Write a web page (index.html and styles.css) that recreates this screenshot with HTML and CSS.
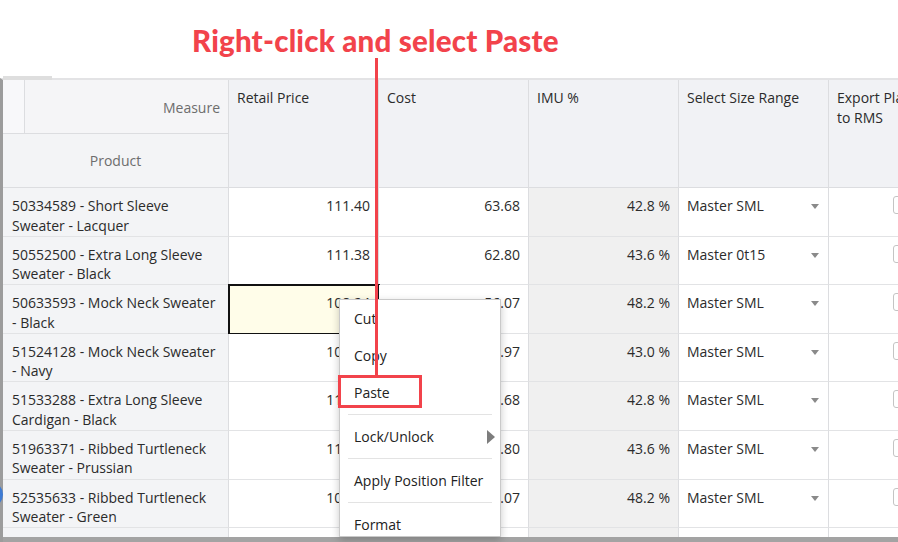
FILE: index.html
```html
<!DOCTYPE html>
<html lang="en">
<head>
    <meta charset="UTF-8">
    <meta name="viewport" content="width=device-width, initial-scale=1.0">
    <title>Paste into Grid</title>
    <link rel="stylesheet" href="styles.css">
</head>
<body>

    <div class="page">
        <div class="callout">
            <h1>Right-click and select Paste</h1>
        </div>

        <div class="sheet">
            <div class="grid-wrap">
                <div class="grid">
                    <!-- header -->
                    <div class="head-cell corner-measure">
                        <span class="corner-stub"></span>
                        <span class="corner-label">Measure</span>
                    </div>
                    <div class="head-cell measure-head">Retail Price</div>
                    <div class="head-cell measure-head">Cost</div>
                    <div class="head-cell measure-head">IMU %</div>
                    <div class="head-cell measure-head">Select Size Range</div>
                    <div class="head-cell measure-head export-head">Export Plan to RMS</div>
                    <div class="head-cell corner-product">Product</div>

                    <!-- rows -->
                    <div class="cell row-head">50334589 - Short Sleeve Sweater - Lacquer</div>
                    <div class="cell num">111.40</div>
                    <div class="cell num">63.68</div>
                    <div class="cell num readonly">42.8 %</div>
                    <div class="cell pick"><span>Master SML</span><span class="caret"></span></div>
                    <div class="cell check"><span class="box"></span></div>

                    <div class="cell row-head">50552500 - Extra Long Sleeve Sweater - Black</div>
                    <div class="cell num">111.38</div>
                    <div class="cell num">62.80</div>
                    <div class="cell num readonly">43.6 %</div>
                    <div class="cell pick"><span>Master 0t15</span><span class="caret"></span></div>
                    <div class="cell check"><span class="box"></span></div>

                    <div class="cell row-head">50633593 - Mock Neck Sweater - Black</div>
                    <div class="cell num selected">108.24</div>
                    <div class="cell num">56.07</div>
                    <div class="cell num readonly">48.2 %</div>
                    <div class="cell pick"><span>Master SML</span><span class="caret"></span></div>
                    <div class="cell check"><span class="box"></span></div>

                    <div class="cell row-head">51524128 - Mock Neck Sweater - Navy</div>
                    <div class="cell num">108.72</div>
                    <div class="cell num">61.97</div>
                    <div class="cell num readonly">43.0 %</div>
                    <div class="cell pick"><span>Master SML</span><span class="caret"></span></div>
                    <div class="cell check"><span class="box"></span></div>

                    <div class="cell row-head">51533288 - Extra Long Sleeve Cardigan - Black</div>
                    <div class="cell num">111.33</div>
                    <div class="cell num">63.68</div>
                    <div class="cell num readonly">42.8 %</div>
                    <div class="cell pick"><span>Master SML</span><span class="caret"></span></div>
                    <div class="cell check"><span class="box"></span></div>

                    <div class="cell row-head">51963371 - Ribbed Turtleneck Sweater - Prussian</div>
                    <div class="cell num">111.38</div>
                    <div class="cell num">62.80</div>
                    <div class="cell num readonly">43.6 %</div>
                    <div class="cell pick"><span>Master SML</span><span class="caret"></span></div>
                    <div class="cell check"><span class="box"></span></div>

                    <div class="cell row-head">52535633 - Ribbed Turtleneck Sweater - Green</div>
                    <div class="cell num">108.24</div>
                    <div class="cell num">56.07</div>
                    <div class="cell num readonly">48.2 %</div>
                    <div class="cell pick"><span>Master SML</span><span class="caret"></span></div>
                    <div class="cell check"><span class="box"></span></div>

                    <div class="cell row-head"></div>
                    <div class="cell num"></div>
                    <div class="cell num"></div>
                    <div class="cell num readonly"></div>
                    <div class="cell pick"></div>
                    <div class="cell check"></div>
                </div>
            </div>
            <div class="hscroll"></div>
        </div>

        <!-- overlays -->
        <span class="side-knob"></span>

        <div class="context-menu">
            <div class="menu-item">Cut</div>
            <div class="menu-item">Copy</div>
            <div class="menu-item">Paste</div>
            <div class="menu-sep"></div>
            <div class="menu-item">Lock/Unlock <span class="sub-arrow"></span></div>
            <div class="menu-sep"></div>
            <div class="menu-item">Apply Position Filter</div>
            <div class="menu-sep"></div>
            <div class="menu-item">Format</div>
        </div>

        <span class="pointer-line"></span>
        <span class="paste-box"></span>
    </div>

</body>
</html>
```

FILE: styles.css
```css
body {
    margin: 0;
    padding: 0;
    background: #fff;
    font-family: "Open Sans", "Noto Sans", Arial, sans-serif;
    color: #2b2b2b;
}

.page {
    position: relative;
    width: 898px;
    height: 542px;
    overflow: hidden;
}

/* title */

.callout {
    height: 78px;
    box-sizing: border-box;
    padding-left: 192px;
    padding-top: 23px;
}

.callout h1 {
    margin: 0;
    font-family: "Lato", "Open Sans", sans-serif;
    font-weight: 900;
    font-size: 29.5px;
    line-height: 36px;
    letter-spacing: 0.2px;
    color: #f2434b;
    white-space: nowrap;
}

/* grid */

.sheet {
    position: relative;
    height: 464px;
    box-sizing: border-box;
    border-top: 2px solid #e3e3e5;
    border-left: 3px solid #9c9c9c;
    display: flex;
    flex-direction: column;
}

.sheet::before {
    content: "";
    position: absolute;
    left: 0;
    top: -4px;
    width: 49px;
    height: 4px;
    background: #dedede;
}

.grid-wrap {
    flex: 1;
    overflow: hidden;
}

.grid {
    display: grid;
    grid-template-columns: 226px repeat(5, 150px);
    grid-template-rows: 54px 54px;
    grid-auto-rows: 48.6px;
    font-size: 14px;
    line-height: 19.5px;
}

.head-cell {
    background: #f1f2f5;
    border-right: 1px solid #dcdde0;
    border-bottom: 1px solid #dcdde0;
    box-sizing: border-box;
    color: #2b2b2b;
}

.measure-head {
    grid-row: span 2;
    padding: 8px 8px;
}

.export-head {
    padding-right: 60px;
}

.corner-measure {
    grid-column: 1;
    grid-row: 1;
    display: flex;
    align-items: center;
    background: #f5f5f7;
    color: #6d6d6d;
}

.corner-stub {
    align-self: stretch;
    width: 21px;
    border-right: 1px solid #dcdde0;
    background: #f8f8fa;
}

.corner-label {
    flex: 1;
    text-align: right;
    padding-right: 8px;
    padding-top: 2px;
}

.corner-product {
    grid-column: 1;
    grid-row: 2;
    display: flex;
    align-items: center;
    justify-content: center;
    background: #f3f4f6;
    color: #6d6d6d;
}

.cell {
    box-sizing: border-box;
    padding: 8px 8px 0;
    border-right: 1px solid #dcdde0;
    border-bottom: 1px solid #e2e3e5;
    background: #fff;
    white-space: nowrap;
}

.row-head {
    background: #f3f4f6;
    padding-left: 9px;
    white-space: normal;
}

.num {
    text-align: right;
}

.readonly {
    background: #f0f0f0;
}

.selected {
    background: #fffde9;
    outline: 2px solid #111;
    outline-offset: -1px;
}

.pick {
    display: flex;
    justify-content: space-between;
    padding-right: 9px;
}

.caret {
    margin-top: 8px;
    width: 0;
    height: 0;
    border-left: 4.5px solid transparent;
    border-right: 4.5px solid transparent;
    border-top: 5px solid #8a8a8a;
}

.check {
    display: flex;
    justify-content: center;
    padding-left: 4px;
}

.box {
    width: 17px;
    height: 18px;
    box-sizing: border-box;
    border: 1px solid #c4c4c4;
    border-radius: 3px;
    background: #fff;
}

.hscroll {
    height: 5px;
    background: #a3a3a3;
}

/* overlays */

.side-knob {
    position: absolute;
    left: -22px;
    top: 482px;
    width: 25px;
    height: 25px;
    border-radius: 50%;
    background: #3e7bd4;
}

.context-menu {
    position: absolute;
    left: 339px;
    top: 299px;
    width: 162px;
    height: 238px;
    box-sizing: border-box;
    overflow: hidden;
    background: #fff;
    border: 1px solid #c9c9c9;
    box-shadow: 0 3px 8px rgba(0, 0, 0, 0.22);
    font-size: 14px;
    color: #222;
}

.menu-item {
    height: 37px;
    display: flex;
    align-items: center;
    padding: 0 5px 0 14px;
    white-space: nowrap;
}

.sub-arrow {
    margin-left: auto;
    width: 0;
    height: 0;
    border-top: 7px solid transparent;
    border-bottom: 7px solid transparent;
    border-left: 8px solid #7d7d7d;
}

.menu-sep {
    height: 1px;
    margin: 3px 8px;
    background: #e3e3e3;
}

.pointer-line {
    position: absolute;
    left: 375px;
    top: 58px;
    width: 3px;
    height: 318px;
    background: #f2434b;
}

.paste-box {
    position: absolute;
    left: 338px;
    top: 375px;
    width: 84px;
    height: 33px;
    box-sizing: border-box;
    border: 3px solid #f2434b;
}
```
